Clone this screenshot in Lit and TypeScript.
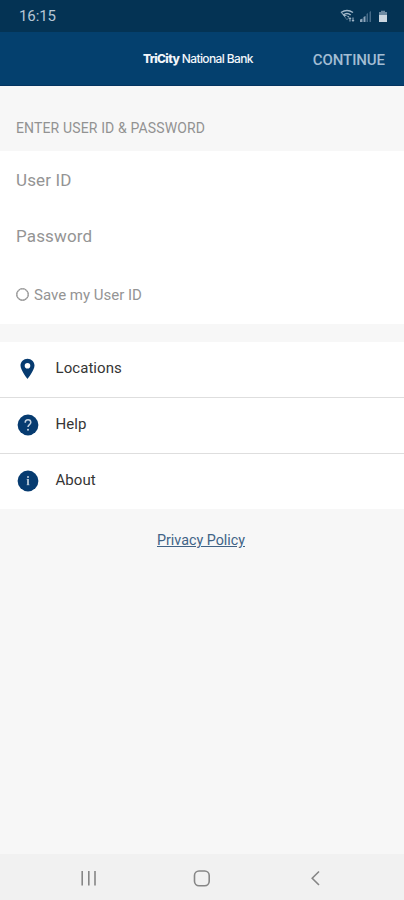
import { LitElement, html, css, svg } from "lit";
import { customElement } from "lit/decorators.js";

const pin = svg`<path fill-rule="evenodd" d="M10.500 .8C6.600 .8 3.500 3.800 3.500 7.600c0 4.800 7 13.400 7 13.400s7-8.600 7-13.400C17.500 3.800 14.400 .8 10.500 .8zm0 4.200a2.800 2.800 0 1 1 0 5.600a2.800 2.800 0 0 1 0-5.600z" fill="#063b70"/>`;
const help = svg`<circle cx="11" cy="11" r="10.400" fill="#063b70"/><path d="M8.200 8.700C8.200 4.800 13.800 5 13.800 8.500C13.800 10.600 11 10.700 11 13.100" fill="none" stroke="#c3d1df" stroke-width="1.500"/><circle cx="11" cy="15.700" r="1" fill="#c3d1df"/>`;
const info = svg`<circle cx="11" cy="11" r="10.400" fill="#063b70"/><path d="M9.600 9.400h1.400M9.600 14.800h2.900" fill="none" stroke="#7f9ab5" stroke-width=".9"/><path d="M11 9v6" stroke="#b9cad9" stroke-width="1.800"/><circle cx="11" cy="7" r="1" fill="#c3d1df"/>`;

@customElement("app-root")
export class AppRoot extends LitElement {
  static styles = css`
    :host { display: flex; flex-direction: column; width: 404px; height: 900px; background: #f7f7f7; font-family: Roboto, sans-serif; overflow: hidden; }
    * { box-sizing: border-box; }
    .status { height: 32px; background: #043354; display: flex; align-items: center; justify-content: space-between; padding: 0 15px 0 19px; color: #b7c6d4; }
    .time { font-size: 15px; letter-spacing: -0.1px; }
    .signals { width: 50px; height: 18px; }
    .header { height: 54px; background: #04406e; border-bottom: 1px solid #043460; display: grid; grid-template-columns: 143px 1fr auto; align-items: center; padding-right: 19px; }
    .brand { grid-column: 2; color: #f2f6fa; font: 500 12px Inter, sans-serif; letter-spacing: -0.62px; white-space: nowrap; }
    .brand b { font-weight: 800; }
    .continue { color: #a2bdd3; font-size: 15px; font-weight: 500; letter-spacing: -0.08px; padding-top: 3px; }
    .caption { height: 65px; padding: 34px 16px 0; font-size: 14px; line-height: 16px; letter-spacing: 0.14px; color: #929292; }
    .form { background: #fff; height: 173px; padding: 0 16px; color: #949494; }
    .field { height: 57px; display: flex; align-items: center; font-size: 17px; letter-spacing: 0.15px; }
    .field + .field { height: 56px; }
    .save { height: 61px; display: flex; align-items: center; gap: 5px; font-size: 15px; }
    .ring { width: 13px; height: 13px; border: 1px solid #8f8f8f; box-shadow: inset 0 0 0 0.500px #999; border-radius: 50%; }
    .list { margin-top: 18px; background: #fff; }
    .row { height: 56px; display: flex; align-items: center; gap: 16px; padding: 0 17px 1px; font-size: 15px; letter-spacing: 0.06px; color: #353535; border-bottom: 1px solid #dedede; }
    .row:last-child { height: 55px; border: 0; }
    .row svg { width: 22px; height: 22px; }
    .label { margin-left: 0.500px; padding-bottom: 2px; }
    .policy { align-self: center; margin: 22px 2px 0 0; color: #416386; font-size: 14.300px; line-height: 18px; text-decoration: underline; }
    .nav { margin-top: auto; height: 46px; background: #f1f1f1; display: flex; }
    .nav svg { width: 404px; height: 46px; }
  `;

  row(icon: unknown, label: string) {
    return html`<div class="row"><svg viewBox="0 0 22 22">${icon}</svg><span class="label">${label}</span></div>`;
  }

  render() {
    return html`
      <div class="status">
        <span class="time">16:15</span>
        <svg class="signals" viewBox="0 0 50 18">
          <g fill="none" stroke="#a5bacb" stroke-width="1.500">
            <path d="M2 5.500Q8 1.500 14 5.500M4.300 8Q8 5 11.700 8"/>
          </g>
          <path d="M1.500 5L8 13l1.700-2.100L8 9z M5.700 9.600Q8 8 10.300 9.600L8 12.600z" fill="#a5bacb"/>
          <path d="M11 10l1.500 2h-1v2.500h-1V12h-1zM14 15l1.500-2h-1v-2.500h-1V13h-1z" fill="#a5bacb"/>
          <path d="M21 15v-2.500l2.500-1V15zM24.500 15v-5l2-1v6z" fill="#8ba4b9"/>
          <path d="M27.500 15V7l1.500-1v9zM30.500 15V5l1.500-1v11z" fill="#456a87"/>
          <path d="M40 8V5h2V3.700h4V5h2v3z" fill="#6d8aa2"/>
          <path d="M40 8h8v7h-8z" fill="#cbd6e0"/>
        </svg>
      </div>
      <div class="header">
        <span class="brand"><b>TriCity</b> National Bank</span>
        <span class="continue">CONTINUE</span>
      </div>
      <div class="caption"><span>ENTER USER ID &amp; PASSWORD</span></div>
      <div class="form">
        <div class="field"><span>User ID</span></div>
        <div class="field"><span>Password</span></div>
        <div class="save"><span class="ring"></span><span>Save my User ID</span></div>
      </div>
      <div class="list">
        ${this.row(pin, "Locations")}
        ${this.row(help, "Help")}
        ${this.row(info, "About")}
      </div>
      <span class="policy">Privacy Policy</span>
      <div class="nav">
        <svg viewBox="0 0 404 46" fill="none" stroke="#868686" stroke-width="1.600">
          <path d="M82.200 17v14.500M88.800 17v14.500M95 17v14.500"/>
          <rect x="194.500" y="17" width="14.700" height="14.700" rx="4.500"/>
          <path d="M319 17.500l-6.800 6.700 6.800 6.800"/>
        </svg>
      </div>
    `;
  }
}
